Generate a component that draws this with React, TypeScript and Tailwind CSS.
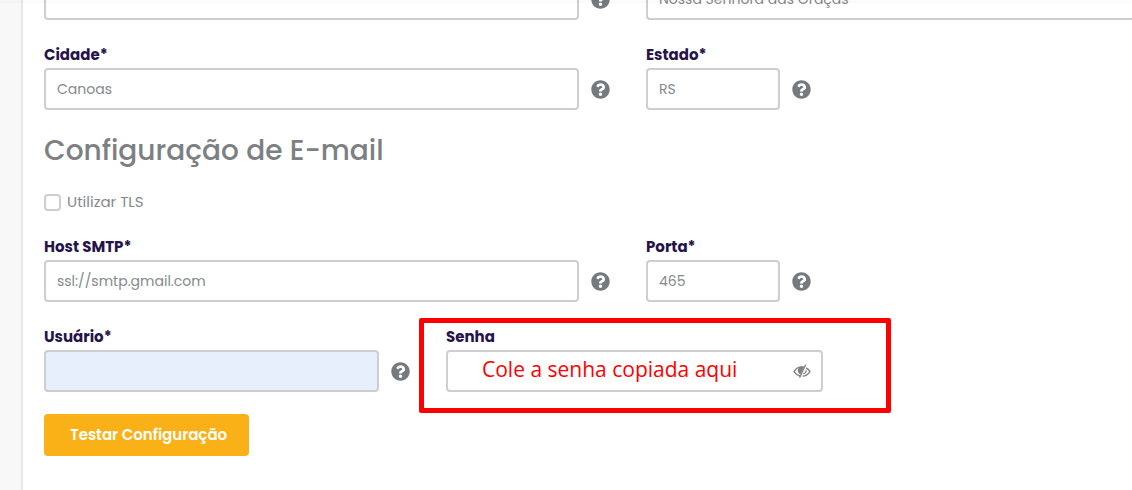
import type { InputHTMLAttributes, ReactNode } from 'react'
import { FaQuestionCircle } from 'react-icons/fa'

const INPUT_CLASS =
  'block h-[42px] w-full min-w-0 rounded border-2 border-[#cccecf] bg-white px-[11px] text-sm text-[#85898c] outline-none focus:border-[#9da1a4]'

interface FieldProps extends InputHTMLAttributes<HTMLInputElement> {
  readonly id: string
  readonly label: string
}

function Field({ id, label, className, ...rest }: FieldProps) {
  return (
    <div>
      <FieldLabel htmlFor={id}>{label}</FieldLabel>
      <input id={id} className={className ?? INPUT_CLASS} {...rest} />
    </div>
  )
}

function FieldLabel({ htmlFor, children }: { htmlFor: string; children: ReactNode }) {
  return (
    <label htmlFor={htmlFor} className="mb-[3px] block text-[15px] leading-[21px] font-bold whitespace-nowrap text-[#25134a]">
      {children}
    </label>
  )
}

/** Help icon that sits beside an input. */
function Help() {
  return (
    <button type="button" aria-label="Ajuda" className="ml-3 flex h-[42px] w-[19px] items-center self-end text-[#757a7e]">
      <FaQuestionCircle className="h-[19px] w-[19px]" aria-hidden />
    </button>
  )
}

function EyeSlash() {
  return (
    <svg viewBox="0 0 18 18" className="h-[18px] w-[18px]" fill="none" stroke="currentColor" aria-hidden>
      <path d="M7.2 14.1C4.4 13.4 2.2 11.6 1 9.6C2.8 6.6 5.6 4.9 9 4.9q.8 0 1.6.1" strokeWidth="1.3" />
      <path d="M11 4.7 7.4 12.4C5.6 11.5 4.8 10 4.8 8.4 4.8 6.8 5.8 5.4 7.4 4.8Z" fill="currentColor" stroke="none" />
      <path d="M12.6 3 6.8 15.2" strokeWidth="1.3" strokeLinecap="round" />
      <path d="M13.1 5.9c1.6.8 2.9 2.100 3.900 3.700-1.700 2.700-4.300 4.400-7.400 4.600" strokeWidth="1.3" />
      <path d="M13.100 7.800c.2 1.900-.9 3.600-2.700 4.300" strokeWidth="1.1" />
    </svg>
  )
}

export default function App() {
  return (
    <div className="relative flex min-h-screen overflow-hidden bg-[#f8f8f8] font-[Poppins,Inter,sans-serif] text-[#85898c]">
      {/* shadow of the fixed header */}
      <div className="absolute inset-x-0 top-0 h-[3px] bg-black/[0.015]" />

      <main className="ml-[21px] min-w-0 flex-1 border-l-2 border-[#e7e7e7] bg-white pb-8 pl-[21px]">
        <form onSubmit={(event) => event.preventDefault()}>
          <div className="-mt-[22px] grid grid-cols-[535fr_67fr_486fr]">
            <input aria-label="Complemento" className={INPUT_CLASS} />
            <Help />
            <input
              aria-label="Bairro"
              defaultValue="Nossa Senhora das Graças"
              className="block h-[42px] w-full min-w-0 rounded-l border-2 border-r-0 border-[#cccecf] bg-white px-[11px] text-sm text-[#85898c] outline-none"
            />
          </div>

          <div className="mt-6 grid grid-cols-[535fr_67fr_134fr_352fr]">
            <Field id="cidade" label="Cidade*" defaultValue="Canoas" />
            <Help />
            <Field id="estado" label="Estado*" defaultValue="RS" />
            <Help />
          </div>

          <h2 className="mt-[21px] text-[28px] leading-10 font-medium text-[#7c8083]">Configuração de E-mail</h2>

          <label className="mt-[19px] flex h-6 w-fit items-center gap-[6px] text-[15px]">
            <input
              type="checkbox"
              className="h-[17px] w-[17px] appearance-none rounded border-2 border-[#cccecf] bg-white checked:bg-[#f9b117]"
            />
            Utilizar TLS
          </label>

          <div className="mt-[22px] grid grid-cols-[535fr_67fr_134fr_352fr]">
            <Field id="host" label="Host SMTP*" defaultValue="ssl://smtp.gmail.com" />
            <Help />
            <Field id="porta" label="Porta*" defaultValue="465" />
            <Help />
          </div>

          <div className="mt-6 grid grid-cols-[335fr_67fr_377fr_309fr]">
            <Field
              id="usuario"
              label="Usuário*"
              className="block h-[42px] w-full min-w-0 rounded border-2 border-[#cccecf] bg-[#e7effc] px-[11px] text-sm outline-none"
            />
            <Help />
            <div className="relative">
              <FieldLabel htmlFor="senha">Senha</FieldLabel>
              <div className="flex h-[42px] items-center rounded border-2 border-[#cccecf] bg-white pr-[10px] pl-[34px]">
                <input
                  id="senha"
                  placeholder="Cole a senha copiada aqui"
                  className="h-full min-w-0 flex-1 bg-transparent pb-1 font-['Open_Sans',sans-serif] text-[21px] text-[#ff0000] outline-none placeholder:text-[#ff0000]"
                />
                <button type="button" aria-label="Mostrar senha" className="text-[#7c8083]">
                  <EyeSlash />
                </button>
              </div>
              {/* highlight around the password field */}
              <div className="pointer-events-none absolute -top-2 -right-[68px] -bottom-[21px] -left-[27px] rounded-xs border-5 border-[#ff0000]" />
            </div>
          </div>

          <button type="submit" className="mt-[22px] h-[42px] rounded bg-[#f9b117] pr-[22px] pl-[26px] text-[15px] font-semibold text-white">
            Testar Configuração
          </button>
        </form>
      </main>
    </div>
  )
}
